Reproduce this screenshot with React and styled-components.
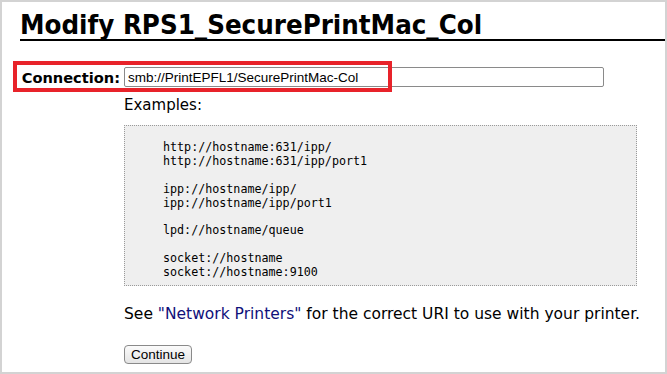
import React from "react";
import styled, { createGlobalStyle } from "styled-components";

const GlobalStyle = createGlobalStyle`
  html, body {
    margin: 0;
    padding: 0;
    background: #ffffff;
  }
  body {
    font-family: "DejaVu Sans", "Liberation Sans", sans-serif;
    color: #000;
  }
`;

const examples = [
  "http://hostname:631/ipp/",
  "http://hostname:631/ipp/port1",
  "",
  "ipp://hostname/ipp/",
  "ipp://hostname/ipp/port1",
  "",
  "lpd://hostname/queue",
  "",
  "socket://hostname",
  "socket://hostname:9100",
];

function App() {
  return (
    <>
      <GlobalStyle />
      <Frame>
        <Heading>Modify RPS1_SecurePrintMac_Col</Heading>
        <FormRow>
          <Label htmlFor="uri">Connection:</Label>
          <UriInput id="uri" defaultValue="smb://PrintEPFL1/SecurePrintMac-Col" />
          <Highlight />
        </FormRow>
        <Field>
          <Caption>Examples:</Caption>
          <ExampleBox>
            {examples.map((line, i) => (
              <CodeLine key={i}>{line || "\u00a0"}</CodeLine>
            ))}
          </ExampleBox>
          <Note>
            See <Link href="#">"Network Printers"</Link> for the correct URI to
            use with your printer.
          </Note>
          <Button type="button">Continue</Button>
        </Field>
      </Frame>
    </>
  );
}
export default App;

const Frame = styled.div`
  box-sizing: border-box;
  width: 667px;
  height: 374px;
  border: 2px solid #d3d3d3;
  overflow: hidden;
`;

const Heading = styled.h2`
  margin: 9px 0 0 18px;
  font-family: "DejaVu Sans Condensed", "DejaVu Sans", sans-serif;
  font-stretch: condensed;
  font-weight: bold;
  font-size: 27.4px;
  line-height: 28px;
  border-bottom: 2px solid #000;
`;

const FormRow = styled.div`
  position: relative;
  display: grid;
  grid-template-columns: 122px 480px;
  align-items: center;
  margin-top: 26px;
`;

const Label = styled.label`
  text-align: right;
  padding-right: 4px;
  font-weight: bold;
  font-size: 14.6px;
`;

const UriInput = styled.input`
  box-sizing: border-box;
  height: 20px;
  width: 480px;
  margin: 0;
  padding: 0 3px;
  border: 1px solid #8a8a8a;
  border-radius: 2px;
  font-family: "Liberation Sans", Arial, sans-serif;
  font-size: 13.5px;
  color: #000;
  outline: none;
`;

const Highlight = styled.div`
  position: absolute;
  left: 11px;
  top: -6px;
  width: 379px;
  height: 31px;
  box-sizing: border-box;
  border: 4px solid #e8232a;
  pointer-events: none;
`;

const Field = styled.div`
  margin-left: 122px;
  display: flex;
  flex-direction: column;
  align-items: flex-start;
`;

const Caption = styled.div`
  margin-top: 9px;
  font-size: 15px;
  line-height: 18px;
`;

const ExampleBox = styled.div`
  box-sizing: border-box;
  margin-top: 11px;
  width: 513px;
  height: 161px;
  padding: 15px 0 5px 38px;
  background: #efefef;
  border: 1px dotted #9a9a9a;
`;

const CodeLine = styled.div`
  font-family: "DejaVu Sans Mono", "Liberation Mono", monospace;
  font-size: 11.7px;
  line-height: 13.9px;
  white-space: pre;
`;

const Note = styled.p`
  margin: 19px 0 0;
  font-size: 15.5px;
  line-height: 18px;
`;

const Link = styled.a`
  color: #10107a;
  text-decoration: none;
`;

const Button = styled.button`
  margin-top: 22px;
  height: 19px;
  padding: 0 6px;
  border: 1px solid #8a8a8a;
  border-radius: 4px;
  background: linear-gradient(#fbfbfb, #e4e4e4);
  font-family: "Liberation Sans", Arial, sans-serif;
  font-size: 13.5px;
  line-height: 17px;
  color: #000;
`;
